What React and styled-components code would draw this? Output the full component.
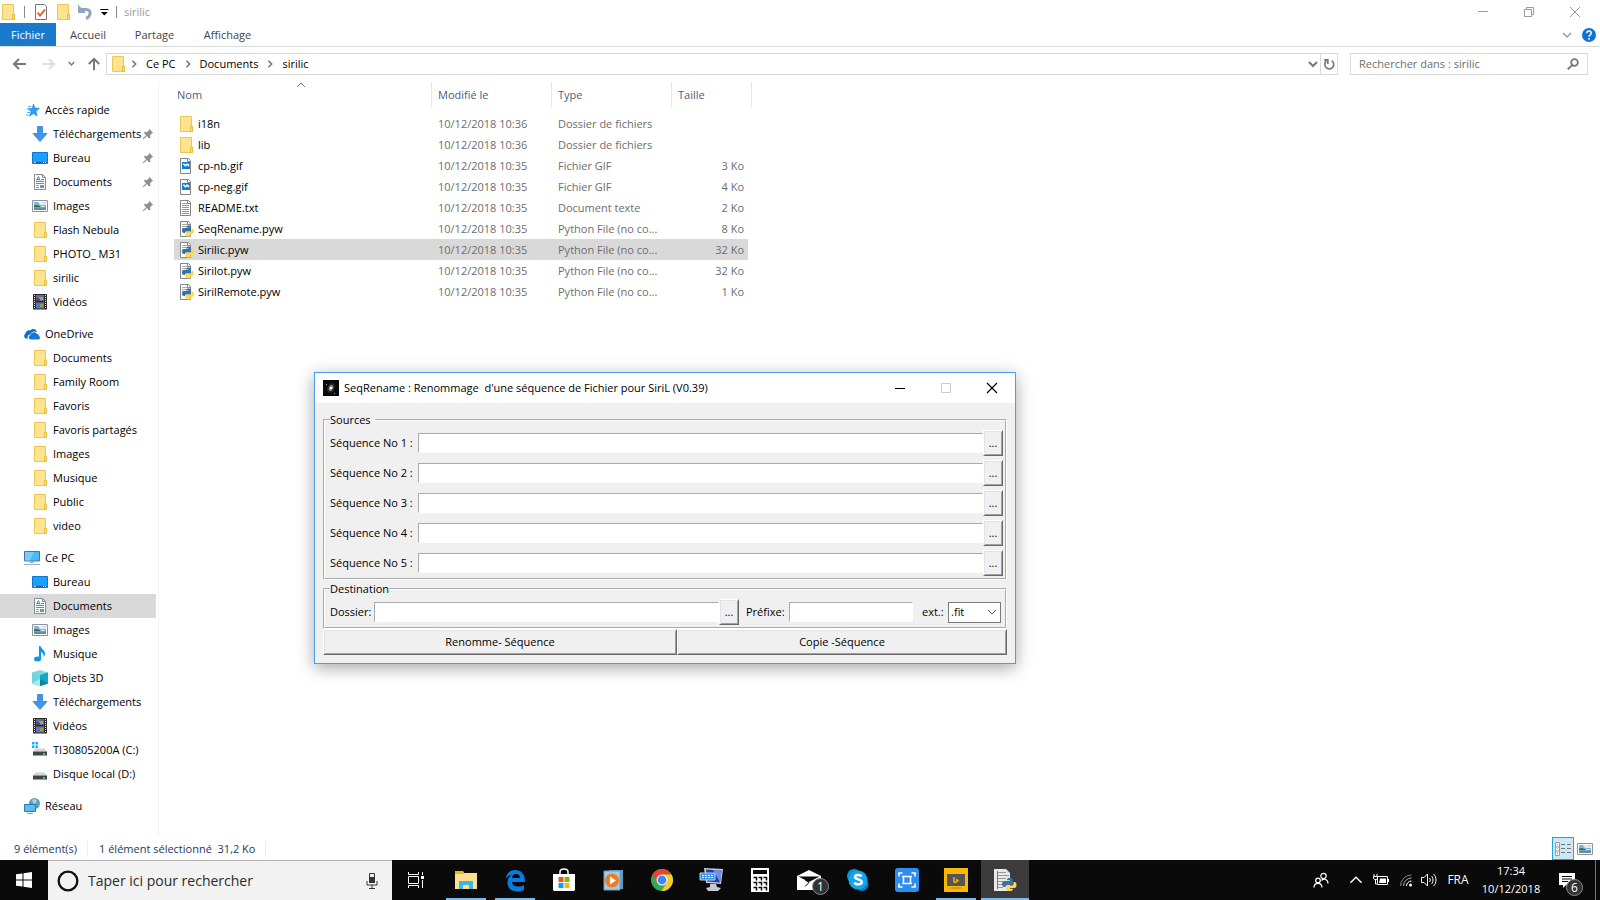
import React from 'react'
import styled, { createGlobalStyle, css } from 'styled-components'

const GlobalStyle = createGlobalStyle`
  * {
    box-sizing: border-box;
  }
  body {
    margin: 0;
    background: #fff;
    color: #000;
    font: 11px/16px "Open Sans", "Noto Sans", sans-serif;
  }
  button, input, select {
    font: inherit;
    color: inherit;
    margin: 0;
    padding: 0;
    border-radius: 0;
  }
  a {
    color: inherit;
    text-decoration: none;
  }
  svg {
    display: block;
    flex: none;
  }
`

const Desktop = styled.div`
  position: relative;
  display: flex;
  flex-direction: column;
  min-height: 100vh;
`

/* ---------- icons ---------- */

const Svg = ({ size = 16, w, h, children, ...rest }) => (
  <svg width={w || size} height={h || size} viewBox={`0 0 ${w || 16} ${h || 16}`} fill="none" aria-hidden="true" {...rest}>
    {children}
  </svg>
)

const Chevron = ({ dir = 'down', size = 10, color = '#777', weight = 1.5 }) => {
  const d = {
    down: 'M1 3l4 4 4-4',
    up: 'M1 7l4-4 4 4',
    right: 'M3 1l4 4-4 4',
  }[dir]
  return (
    <svg width={size} height={size} viewBox="0 0 10 10" fill="none" aria-hidden="true">
      <path d={d} stroke={color} strokeWidth={weight} />
    </svg>
  )
}

const FolderIcon = () => (
  <Svg>
    <path d="M2.500.5h11v9.500h1v5.500h-12z" fill="#ffe391" stroke="#ecc84e" />
    <path d="M12.500 15.500v-5h2v5z" fill="#ffe08a" stroke="#e6bd3e" />
  </Svg>
)

const StarIcon = () => (
  <Svg>
    <path d="M9.500 2l1.400 4 4.600.4-3.500 2.800 1.100 4.800-3.600-2.500-4 2.700 1.600-4.700-3.100-2.900 4.200-.2z" fill="#2a9df4" stroke="#1b82d1" strokeWidth=".6" />
    <path d="M4 4.500h3M2.500 7h3M3 10.500h3M2 13h3" stroke="#55b5f7" />
  </Svg>
)

const DownloadIcon = () => (
  <Svg>
    <path d="M5.500.5h5v7h4.500l-7 8-7-8h4.500z" fill="#3f97ec" stroke="#2f80d2" strokeWidth=".8" />
  </Svg>
)

const DesktopIcon = () => (
  <Svg>
    <path d="M.5 2.500h15v11H.5z" fill="#1a9fff" stroke="#0b77cf" />
    <path d="M1 12.500h14" stroke="#0a5fae" />
    <path d="M2 12.500h1.500M11 12.500h1M13 12.500h1" stroke="#fff" />
  </Svg>
)

const DocumentIcon = () => (
  <Svg>
    <path d="M2.500.5h8l3 3v12h-11z" fill="#fff" stroke="#8a8a8a" />
    <path d="M10.500.5v3h3" stroke="#8a8a8a" />
    <path d="M4.500 6.500l2-4 1.500 4M5 5.500h2.500" stroke="#2492d8" />
    <path d="M9 5.500h3M4 7.500h8M4 9.500h8" stroke="#3a9ad6" />
    <path d="M4 11.500h3M4 13.500h3" stroke="#999" />
    <path d="M8 11h4v3H8z" fill="#5d9cc0" />
  </Svg>
)

const PictureIcon = () => (
  <Svg>
    <path d="M.5 2.500h15v11H.5z" fill="#fff" stroke="#8f9499" />
    <path d="M2 4h12v4H2z" fill="#7db4ea" />
    <path d="M6 4h5l3 1v2H8z" fill="#dcebf8" />
    <path d="M2 7.500l3-.5 5 2 4-.500V9.500H2z" fill="#3f6b4f" />
    <path d="M2 9.500h12V12H2z" fill="#5c8fa8" />
  </Svg>
)

const VideoIcon = () => (
  <Svg>
    <path d="M1 0h14v15.500H1z" fill="#2e2e2e" />
    <path d="M4 1h8v6H4z" fill="#4a6cc0" />
    <path d="M4 8.500h8v6H4z" fill="#5577c8" />
    <path d="M7 3h4v3H7z" fill="#c0a032" />
    <path d="M4 4.500h4v2.500H4z" fill="#8d3332" />
    <path d="M8 10h3v3H8z" fill="#a8963c" />
    <path d="M2.500 1v14M13.500 1v14" stroke="#e8e8e8" strokeDasharray="1 1" />
  </Svg>
)

const OneDriveIcon = () => (
  <Svg>
    <path d="M1.500 12.500A3 3 0 0 1 1.500 7.500 3.500 3.500 0 0 1 6 4.500a4 4 0 0 1 7 1.500c-3-1.500-6 0-6.500 2.500-2.500-.2-3.500 2-2.500 4z" fill="#0d6fc9" />
    <path d="M6.500 13.500a2.300 2.300 0 0 1 0-4.500 3.500 3.500 0 0 1 6.500-1c1.500 0 2 .8 1.800 2 1.700.5 1.500 3.500-.3 3.500z" fill="#1079d9" />
  </Svg>
)

const PcIcon = () => (
  <Svg>
    <path d="M.5 1.500h15v9.500H.5z" fill="#4cb8f8" stroke="#3a7ca8" />
    <path d="M1 2h9L6 10.500H1z" fill="#7accfb" />
    <path d="M6 12h4v1H6z" fill="#8fa3b3" />
    <path d="M0 14.500h16" stroke="#9fb0be" />
  </Svg>
)

const MusicIcon = () => (
  <Svg>
    <ellipse cx="5.500" cy="13" rx="3.500" ry="2.500" fill="#0a97f0" />
    <path d="M7 13V0h1.500c.5 3 4.500 4 4.500 7.500 0 1.500-.5 2.500-1.500 3.500.5-3-1-4.500-2.500-5v7z" fill="#0a97f0" />
  </Svg>
)

const CubeIcon = () => (
  <Svg>
    <path d="M8 0l8 2.500v11L8 16l-8-2.500v-11z" fill="#7bdbe3" />
    <path d="M0 2.500L8 5v11l-8-2.500z" fill="#6fd5de" />
    <path d="M8 5l8-2.500v11L8 16z" fill="#16a4c8" />
    <path d="M0 13.500L8 9v7z" fill="#a5ecf0" />
    <path d="M8 9l8 4.500L8 16z" fill="#0d8596" />
  </Svg>
)

const DriveIcon = ({ system }) => (
  <Svg>
    {system && <path d="M0 0h2.500v2.500H0zM3.500 0H6v2.500H3.500zM0 3.500h2.500V6H0zM3.500 3.500H6V6H3.500z" fill="#14b0ef" />}
    <path d="M3.500 6.500h9l2.500 3H1z" fill="#d2d4d6" />
    <path d="M1 9.500h14v4H1z" fill="#3f4347" />
    <path d="M11 12h2" stroke="#5cf06a" strokeWidth="1.500" />
  </Svg>
)

const NetworkIcon = () => (
  <Svg>
    <circle cx="10.500" cy="5.500" r="5.500" fill="#5c9db8" />
    <path d="M8 2c2-1.500 4-1 5 1l-2 3-2-1z" fill="#a9d6de" />
    <path d="M.5 6.500h11v7H.5z" fill="#55bdf8" stroke="#2f77a8" />
    <path d="M3 15.500h6" stroke="#8fa3b3" />
  </Svg>
)

const PinIcon = () => (
  <Svg size={12}>
    <path d="M9.500 1l5.500 5.500-1.800.6-2.200 2.400.2 3-1.500 1.500-3.200-3.200L2 15 1 14l4.500-4.500L2.500 6.500 4 5l3 .2L9.200 3z" fill="#8c9299" />
  </Svg>
)

const Page = ({ children }) => (
  <Svg>
    <g transform="translate(1 0)">
      <path d="M1.500.5h8l2 2v13h-10z" fill="#fff" stroke="#858585" />
      <path d="M8.500.5v3h3" stroke="#858585" />
      {children}
    </g>
  </Svg>
)

const GifIcon = () => (
  <Page>
    <path d="M3 4h8v7H3z" fill="#0c7cd5" />
    <path d="M4 6.500l1-.500 1.500 2L8 6l1.500 1.500V6" stroke="#fff" strokeWidth="1.300" />
  </Page>
)

const TextIcon = () => (
  <Page>
    <path d="M3 3.500h5M3 5.500h7M3 7.500h7M3 9.500h7M3 11.500h7M3 13.500h7" stroke="#9a9a9a" />
  </Page>
)

const PythonShape = () => (
  <>
    <path d="M7 6.500C7 5 8 4.500 9.500 4.500S12 5 12 6.500V9c0 1-.5 1.500-1.500 1.500h-3C6.500 10.500 6 11 6 12H5c-1.500 0-2-1-2-2.500S3.500 7 5 7h4.500v-.5z" fill="#3673a5" />
    <path d="M12.500 8h.8c1.200 0 1.700 1 1.700 2.500S14.500 13 13 13h-3.500v.5H12c0 1.500-1 2-2.500 2S6.500 15 6.500 13.500V12c0-.8.500-1.200 1.300-1.200h3c1 0 1.700-.7 1.700-1.700z" fill="#ffd748" />
  </>
)

const PythonIcon = () => (
  <Page>
    <path d="M3 3.500h5M3 5.500h4M3 7.500h2" stroke="#aaa" />
    <PythonShape />
  </Page>
)

/* ---------- explorer window ---------- */

const TitleBar = styled.header`
  display: flex;
  align-items: center;
  height: 23px;
  padding: 0 2px 0 0;
  color: #999;
`

const QuickAccess = styled.div`
  display: flex;
  align-items: center;
  gap: 6px;
  flex: 1;
`

const QuickButton = styled.button`
  display: flex;
  border: 0;
  background: none;
`

const Divider = styled.span`
  width: 1px;
  height: 12px;
  margin: 0 ${props => props.$gap || 1}px;
  background: #8a8a8a;
`

const WindowButton = styled.button`
  display: flex;
  align-items: center;
  justify-content: center;
  width: 46px;
  height: ${props => props.$height}px;
  border: 0;
  background: none;
`

const Tabs = styled.nav`
  display: flex;
  align-items: center;
  height: 24px;
  border-bottom: 1px solid #dadbdc;
  color: #444;
`

const Tab = styled.a`
  height: 23px;
  line-height: 24px;
  width: ${props => props.$width}px;
  text-align: center;
  ${props => props.$active && css`
    background: #1979ca;
    color: #fff;
  `}
`

const TabsEnd = styled.div`
  display: flex;
  align-items: center;
  gap: 10px;
  margin-left: auto;
  padding-right: 4px;
`

const AddressRow = styled.div`
  display: flex;
  align-items: center;
  height: 35px;
  padding: 0 12px 2px 12px;
`

const Arrows = styled.div`
  display: flex;
  align-items: center;
  width: 94px;
  gap: 12px;
`

const AddressBox = styled.div`
  display: flex;
  align-items: center;
  flex: 1;
  height: 22px;
  border: 1px solid #d9d9d9;
  padding-left: 3px;
`

const Crumbs = styled.nav`
  display: flex;
  align-items: center;
  flex: 1;
  gap: 8px;
  padding-left: 4px;
`

const Refresh = styled.button`
  display: flex;
  align-items: center;
  justify-content: center;
  width: 17px;
  height: 20px;
  margin-left: 2px;
  border: 0;
  border-left: 1px solid #d9d9d9;
  background: none;
`

const SearchBox = styled.label`
  display: flex;
  align-items: center;
  width: 238px;
  height: 22px;
  margin-left: 12px;
  padding: 0 8px;
  border: 1px solid #d9d9d9;
  color: #6d6d6d;
`

const PlainInput = styled.input`
  flex: 1;
  min-width: 0;
  border: 0;
  outline: 0;
  background: none;
  &::placeholder {
    color: inherit;
    opacity: 1;
  }
`

const Main = styled.main`
  display: flex;
  flex: 1;
`

const NavPane = styled.nav`
  width: 159px;
  padding: 16px 2px 0 0;
  border-right: 1px solid #f2f2f2;
`

const NavGroup = styled.ul`
  list-style: none;
  margin: 0 0 8px;
  padding: 0;
`

const NavLink = styled.a`
  display: flex;
  align-items: center;
  height: 24px;
  padding: 0 2px 0 ${props => (props.$root ? 24 : 32)}px;
  background: ${props => (props.$selected ? '#d9d9d9' : 'none')};
`

const NavLabel = styled.span`
  flex: 1;
  margin-left: 5px;
  overflow: hidden;
  white-space: nowrap;
`

const FilePane = styled.section`
  flex: 1;
  padding-left: 15px;
`

const FileTable = styled.table`
  width: 578px;
  table-layout: fixed;
  border-spacing: 0;
  color: #6d6d6d;
`

const HeadCell = styled.th`
  height: 25px;
  padding: 0 6px;
  width: ${props => props.$width}px;
  border-right: 1px solid #e5e5e5;
  color: #4c607a;
  font-weight: normal;
  text-align: left;
  &:first-child {
    padding-left: 3px;
  }
`

const SortMark = styled.span`
  display: flex;
  justify-content: center;
  height: 0;
  & > svg {
    margin-top: -7px;
  }
`

const Spacer = styled.tbody`
  height: 6px;
`

const Cell = styled.td`
  height: 21px;
  padding: 0 4px 0 6px;
  white-space: nowrap;
  overflow: hidden;
  text-overflow: ellipsis;
  background: ${props => (props.$selected ? '#d9d9d9' : 'none')};
  background-clip: padding-box;
  text-align: ${props => (props.$right ? 'right' : 'left')};
  &:first-child {
    padding-left: 4px;
  }
  &:last-child {
    border-right: 4px solid transparent;
  }
`

const FileName = styled.span`
  display: flex;
  align-items: center;
  gap: 4px;
  color: #000;
`

const StatusBar = styled.footer`
  display: flex;
  align-items: center;
  height: 23px;
  padding: 0 4px 0 14px;
  color: #1e395b;
`

const StatusItem = styled.span`
  padding-right: 10px;
  margin-right: 11px;
  border-right: 1px solid #eee;
  white-space: pre;
`

const ViewButton = styled.button`
  display: flex;
  align-items: center;
  justify-content: center;
  width: 22px;
  height: 23px;
  border: 1px solid ${props => (props.$active ? '#26a0da' : 'transparent')};
  background: ${props => (props.$active ? '#cce8f6' : 'none')};
`

const StatusEnd = styled.div`
  display: flex;
  margin-left: auto;
`

/* ---------- SeqRename dialog ---------- */

const Dialog = styled.section`
  position: absolute;
  left: 314px;
  top: 372px;
  width: 702px;
  border: 1px solid #4a9cf0;
  background: #f0f0f0;
  box-shadow: 0 4px 16px rgba(0, 0, 0, 0.35);
`

const DialogTitle = styled.header`
  display: flex;
  align-items: center;
  height: 30px;
  padding-left: 8px;
  gap: 5px;
  background: #fff;
  white-space: pre;
`

const TitleText = styled.span`
  flex: 1;
`

const DialogBody = styled.form`
  padding: 9px 8px 8px;
`

const Group = styled.fieldset`
  margin: 0;
  padding: 2px 2px 2px 5px;
  border: 2px groove #fff;
  & + & {
    margin-top: 1px;
  }
`

const Legend = styled.legend`
  padding: 0 ${props => props.$pad || 0}px 0 0;
`

const Row = styled.div`
  display: flex;
  align-items: center;
  height: 26px;
  margin: 0 ${props => props.$inset || 0}px 4px 0;
  &:last-child {
    margin-bottom: 0;
  }
`

const Label = styled.label`
  width: ${props => props.$width}px;
  margin-left: ${props => props.$indent || 0}px;
  white-space: nowrap;
`

const PathInput = styled.input`
  height: 20px;
  min-width: 0;
  border: 1px inset #fff;
  outline: 0;
  background: #fff;
  ${props => (props.$width ? `width: ${props.$width}px;` : 'flex: 1;')}
`

const BevelButton = styled.button`
  height: 26px;
  width: ${props => props.$width}px;
  flex: ${props => props.$grow || 'none'};
  border: 1px solid;
  border-color: #fff #696969 #696969 #fff;
  box-shadow: inset 1px 1px #e3e3e3, inset -1px -1px #a0a0a0;
  background: #f0f0f0;
`

const SelectWrap = styled.span`
  display: grid;
  align-items: center;
  width: 53px;
  & > * {
    grid-area: 1 / 1;
  }
  & > svg {
    justify-self: end;
    margin-right: 4px;
    pointer-events: none;
  }
`

const Select = styled.select`
  appearance: none;
  height: 21px;
  padding-left: 2px;
  border: 1px solid #7a7a7a;
  background: #fff;
`

const Actions = styled.div`
  display: flex;
`

/* ---------- taskbar ---------- */

const Taskbar = styled.footer`
  display: flex;
  align-items: stretch;
  height: 40px;
  background: #0a0a0a;
  color: #fff;
`

const TaskSearch = styled.label`
  display: flex;
  align-items: center;
  width: 344px;
  gap: 9px;
  padding: 0 14px 0 9px;
  border-top: 1px solid #b5b5b5;
  background: #f2f2f2;
  color: #2b2b2b;
  font-size: 14px;
  line-height: 20px;
`

const TaskButton = styled.button`
  display: flex;
  align-items: center;
  justify-content: center;
  width: 48px;
  margin-right: 1px;
  border: 0;
  background: ${props => (props.$active ? '#3c3c3c' : 'none')};
  ${props => (props.$open || props.$active) && css`
    background-image: linear-gradient(#76b9ed, #76b9ed);
    background-size: ${props.$active ? 48 : 40}px 2px;
    background-position: center bottom;
    background-repeat: no-repeat;
  `}
`

const TaskList = styled.div`
  display: flex;
  flex: 1;
  padding-left: 1px;
`

const Tray = styled.div`
  display: flex;
  align-items: center;
`

const TrayButton = styled.button`
  display: flex;
  align-items: center;
  justify-content: center;
  width: ${props => props.$width}px;
  height: 40px;
  border: 0;
  background: none;
  font-size: 12px;
`

const Clock = styled.time`
  width: 72px;
  line-height: 18px;
  text-align: center;
`

const ShowDesktop = styled.button`
  width: 5px;
  height: 40px;
  margin-left: 8px;
  border: 0;
  border-left: 1px solid #777;
  background: none;
`

const Badged = styled.span`
  position: relative;
  display: flex;
`

const Badge = styled.span`
  position: absolute;
  left: ${props => props.$left}px;
  top: ${props => props.$top}px;
  width: 17px;
  height: 17px;
  border: 1px solid #8a8a8a;
  border-radius: 50%;
  background: #333;
  color: #fff;
  font-size: 12px;
  line-height: 15px;
  text-align: center;
`

const quickLinks = [
  ['Accès rapide', StarIcon],
  ['Téléchargements', DownloadIcon, true],
  ['Bureau', DesktopIcon, true],
  ['Documents', DocumentIcon, true],
  ['Images', PictureIcon, true],
  ['Flash Nebula', FolderIcon],
  ['PHOTO_ M31', FolderIcon],
  ['sirilic', FolderIcon],
  ['Vidéos', VideoIcon],
]

const oneDrive = [
  ['OneDrive', OneDriveIcon],
  ...['Documents', 'Family Room', 'Favoris', 'Favoris partagés', 'Images', 'Musique', 'Public', 'video'].map(
    name => [name, FolderIcon]
  ),
]

const thisPc = [
  ['Ce PC', PcIcon],
  ['Bureau', DesktopIcon],
  ['Documents', DocumentIcon, false, true],
  ['Images', PictureIcon],
  ['Musique', MusicIcon],
  ['Objets 3D', CubeIcon],
  ['Téléchargements', DownloadIcon],
  ['Vidéos', VideoIcon],
  ['TI30805200A (C:)', () => <DriveIcon system />],
  ['Disque local (D:)', DriveIcon],
]

const groups = [quickLinks, oneDrive, thisPc, [['Réseau', NetworkIcon]]]

const python = 'Python File (no co...'
const files = [
  ['i18n', FolderIcon, '10:36', 'Dossier de fichiers', ''],
  ['lib', FolderIcon, '10:36', 'Dossier de fichiers', ''],
  ['cp-nb.gif', GifIcon, '10:35', 'Fichier GIF', '3 Ko'],
  ['cp-neg.gif', GifIcon, '10:35', 'Fichier GIF', '4 Ko'],
  ['README.txt', TextIcon, '10:35', 'Document texte', '2 Ko'],
  ['SeqRename.pyw', PythonIcon, '10:35', python, '8 Ko'],
  ['Sirilic.pyw', PythonIcon, '10:35', python, '32 Ko'],
  ['Sirilot.pyw', PythonIcon, '10:35', python, '32 Ko'],
  ['SirilRemote.pyw', PythonIcon, '10:35', python, '1 Ko'],
]

function Explorer() {
  return (
    <>
      <TitleBar>
        <QuickAccess>
          <FolderIcon />
          <Divider $gap={2} />
          <QuickButton aria-label="Propriétés">
            <Svg>
              <path d="M2.500.5h9l2 2v13h-11z" fill="#fff" stroke="#777" />
              <path d="M4.500 8.500l2.500 3L12 5.500" stroke="#e8591c" strokeWidth="1.800" />
            </Svg>
          </QuickButton>
          <QuickButton aria-label="Nouveau dossier"><FolderIcon /></QuickButton>
          <QuickButton aria-label="Annuler">
            <Svg>
              <path d="M3 5.500h6c6 0 5 7 0 9" stroke="#92a3c0" strokeWidth="3" />
              <path d="M1 .5v8.500h8z" fill="#92a3c0" />
            </Svg>
          </QuickButton>
          <QuickButton aria-label="Personnaliser">
            <Svg size={10}>
              <path d="M2 4h13" stroke="#000" strokeWidth="1.600" />
              <path d="M3 8h11l-5.500 5.500z" fill="#000" />
            </Svg>
          </QuickButton>
          <Divider />
          <span>sirilic</span>
        </QuickAccess>
        <WindowButton $height={23} aria-label="Réduire">
          <Svg w={12} h={12}><path d="M1 5.500h10" stroke="#999" /></Svg>
        </WindowButton>
        <WindowButton $height={23} aria-label="Niveau inférieur">
          <Svg w={12} h={12}>
            <path d="M1.500 3.500h7v7h-7zM3.500 3V1.500h7v7H9" stroke="#999" />
          </Svg>
        </WindowButton>
        <WindowButton $height={23} aria-label="Fermer">
          <Svg w={12} h={12}><path d="M1 1l10 10M11 1L1 11" stroke="#999" /></Svg>
        </WindowButton>
      </TitleBar>

      <Tabs>
        <Tab href="#fichier" $width={56} $active>Fichier</Tab>
        <Tab href="#accueil" $width={64}>Accueil</Tab>
        <Tab href="#partage" $width={69}>Partage</Tab>
        <Tab href="#affichage" $width={77}>Affichage</Tab>
        <TabsEnd>
          <Chevron color="#999" />
          <Svg size={14}>
            <circle cx="8" cy="8" r="8" fill="#0f74d1" />
            <path d="M5.500 6c0-3.300 5-3.300 5 0 0 1.800-2.500 1.800-2.500 4M8 11.500v2" stroke="#fff" strokeWidth="1.700" />
          </Svg>
        </TabsEnd>
      </Tabs>

      <AddressRow>
        <Arrows>
          <QuickButton aria-label="Précédent">
            <Svg><path d="M2 8h12M7 3L2 8l5 5" stroke="#777" strokeWidth="2" /></Svg>
          </QuickButton>
          <QuickButton aria-label="Suivant">
            <Svg><path d="M2 8h12M9 3l5 5-5 5" stroke="#ddd" strokeWidth="2" /></Svg>
          </QuickButton>
          <Chevron size={7} weight={2} />
          <QuickButton aria-label="Dossier parent">
            <Svg size={14}><path d="M8 15V2M2 8l6-6 6 6" stroke="#777" strokeWidth="2.200" /></Svg>
          </QuickButton>
        </Arrows>
        <AddressBox>
          <FolderIcon />
          <Crumbs>
            <Chevron dir="right" weight={2} size={8} />
            <a href="#pc">Ce PC</a>
            <Chevron dir="right" weight={2} size={8} />
            <a href="#documents">Documents</a>
            <Chevron dir="right" weight={2} size={8} />
            <a href="#sirilic">sirilic</a>
          </Crumbs>
          <Chevron weight={2} />
          <Refresh aria-label="Actualiser">
            <Svg size={12}>
              <path d="M11.500 3.500a6 6 0 1 1-7 .5M1.500 2.500h5v5.500" stroke="#777" strokeWidth="2.200" />
            </Svg>
          </Refresh>
        </AddressBox>
        <SearchBox>
          <PlainInput type="search" aria-label="Rechercher" placeholder="Rechercher dans : sirilic" />
          <Svg size={12}>
            <circle cx="10" cy="6" r="4.500" stroke="#777" strokeWidth="2.400" />
            <path d="M7 9.500L1 15" stroke="#777" strokeWidth="2.600" />
          </Svg>
        </SearchBox>
      </AddressRow>

      <Main>
        <NavPane>
          {groups.map((group, g) => (
            <NavGroup key={g}>
              {group.map(([name, Icon, pinned, selected], i) => (
                <li key={name}>
                  <NavLink href="#" $root={i === 0} $selected={selected}>
                    <Icon />
                    <NavLabel>{name}</NavLabel>
                    {pinned && <PinIcon />}
                  </NavLink>
                </li>
              ))}
            </NavGroup>
          ))}
        </NavPane>
        <FilePane>
          <FileTable>
            <thead>
              <tr>
                <HeadCell $width={258}>
                  <SortMark><Chevron dir="up" size={10} weight={1} /></SortMark>
                  Nom
                </HeadCell>
                <HeadCell $width={120}>Modifié le</HeadCell>
                <HeadCell $width={120}>Type</HeadCell>
                <HeadCell $width={80}>Taille</HeadCell>
              </tr>
            </thead>
            <Spacer><tr /></Spacer>
            <tbody>
              {files.map(([name, Icon, time, type, size]) => {
                const selected = name === 'Sirilic.pyw'
                return (
                  <tr key={name}>
                    <Cell $selected={selected}>
                      <FileName><Icon />{name}</FileName>
                    </Cell>
                    <Cell $selected={selected}>10/12/2018 {time}</Cell>
                    <Cell $selected={selected}>{type}</Cell>
                    <Cell $selected={selected} $right>{size}</Cell>
                  </tr>
                )
              })}
            </tbody>
          </FileTable>
        </FilePane>
      </Main>

      <StatusBar>
        <StatusItem>9 élément(s)</StatusItem>
        <StatusItem>{'1 élément sélectionné  31,2 Ko'}</StatusItem>
        <StatusEnd>
          <ViewButton $active aria-label="Détails">
            <Svg w={16} h={14}>
              <path d="M.5.500h4v13h-4zM.5 5h4M.5 9h4" fill="#fff" stroke="#999" />
              <path d="M2 3h1" stroke="#666" />
              <path d="M2 7h1" stroke="#39f" />
              <path d="M2 11h1" stroke="#e11" />
              <path d="M6 2.500h4M12 2.500h4M6 6.500h4M12 6.500h4M6 10.500h4M12 10.500h4" stroke="#777" />
            </Svg>
          </ViewButton>
          <ViewButton aria-label="Grandes icônes"><PictureIcon /></ViewButton>
        </StatusEnd>
      </StatusBar>
    </>
  )
}

function SeqRename() {
  return (
    <Dialog aria-label="SeqRename">
      <DialogTitle>
        <Svg>
          <path d="M0 0h16v16H0z" fill="#0a0a0a" />
          <ellipse cx="8" cy="8" rx="3.500" ry="5" fill="#2c2c2c" transform="rotate(25 8 8)" />
          <ellipse cx="8" cy="8" rx="2" ry="3" fill="#888" transform="rotate(25 8 8)" />
          <circle cx="8" cy="8" r="1.300" fill="#fff" />
          <path d="M11 13.500h1M3 4.500h1" stroke="#aaa" />
        </Svg>
        <TitleText>{"SeqRename : Renommage  d'une séquence de Fichier pour SiriL (V0.39)"}</TitleText>
        <Tray>
          <WindowButton $height={30} aria-label="Réduire">
            <Svg w={12} h={12}><path d="M1 6.500h10" stroke="#000" /></Svg>
          </WindowButton>
          <WindowButton $height={30} aria-label="Agrandir" disabled>
            <Svg w={12} h={12}><path d="M1.500 1.500h9v9h-9z" stroke="#ccc" /></Svg>
          </WindowButton>
          <WindowButton $height={30} aria-label="Fermer">
            <Svg w={12} h={12}><path d="M1 1l10 10M11 1L1 11" stroke="#000" strokeWidth="1.200" /></Svg>
          </WindowButton>
        </Tray>
      </DialogTitle>
      <DialogBody onSubmit={e => e.preventDefault()}>
        <Group>
          <Legend $pad={4}>Sources</Legend>
          {[1, 2, 3, 4, 5].map(n => (
            <Row key={n}>
              <Label htmlFor={`seq${n}`} $width={88}>Séquence No {n} :</Label>
              <PathInput id={`seq${n}`} />
              <BevelButton type="button" $width={20}>...</BevelButton>
            </Row>
          ))}
        </Group>
        <Group>
          <Legend>Destination</Legend>
          <Row $inset={2}>
            <Label htmlFor="dossier" $width={44}>Dossier:</Label>
            <PathInput id="dossier" />
            <BevelButton type="button" $width={20}>...</BevelButton>
            <Label htmlFor="prefixe" $width={43} $indent={7}>Préfixe:</Label>
            <PathInput id="prefixe" $width={124} />
            <Label htmlFor="ext" $width={26} $indent={9}>ext.:</Label>
            <SelectWrap>
              <Select id="ext" defaultValue=".fit">
                <option>.fit</option>
                <option>.fits</option>
              </Select>
              <Chevron color="#555" weight={1} />
            </SelectWrap>
          </Row>
        </Group>
        <Actions>
          <BevelButton type="submit" $grow="354 1 0">Renomme- Séquence</BevelButton>
          <BevelButton type="button" $grow="330 1 0">Copie -Séquence</BevelButton>
        </Actions>
      </DialogBody>
    </Dialog>
  )
}

/* Pinned and running applications, left to right. */
const apps = [
  {
    name: 'Explorateur', open: true,
    icon: (
      <>
        <path d="M1 3h8l1 2h13v16H1z" fill="#ffe08a" />
        <path d="M1 3h8l1 3H1z" fill="#f2b51e" />
        <path d="M5 13h14v8h-4v-4H9v4H5z" fill="#3fb4ea" />
      </>
    ),
  },
  {
    name: 'Edge', open: true,
    icon: (
      <path d="M2.500 11C3.500 5 7.500 2 12 2c6.500 0 10 4.500 10 11.500v.5H9c.5 3.500 3 4.500 6 4.500 2.500 0 4.500-.5 6-1.500v5c-2 1-4 1.500-7 1.500-6 0-9.500-3.500-9.500-9 0-3.500 2-6.500 5-8-3 .5-5.500 2-7 4.500zM9 10h8c0-2.500-1.500-4-4-4s-3.500 1.500-4 4z" fill="#0a7ce0" fillRule="evenodd" />
    ),
  },
  {
    name: 'Store',
    icon: (
      <>
        <path d="M8 6V4c0-4 8-4 8 0v2" stroke="#fff" strokeWidth="1.500" />
        <path d="M1 6h22v15c0 1.500-.5 2-2 2H3c-1.500 0-2-.5-2-2z" fill="#fff" />
        <path d="M6.500 9h5v5h-5z" fill="#f25022" />
        <path d="M12.500 9h5v5h-5z" fill="#7fba00" />
        <path d="M6.500 15h5v5h-5z" fill="#00a4ef" />
        <path d="M12.500 15h5v5h-5z" fill="#ffb900" />
      </>
    ),
  },
  {
    name: 'Lecteur multimédia',
    icon: (
      <>
        <path d="M8 2h14v19H8z" fill="#5f9cc4" />
        <path d="M3 3h16v19H3z" fill="#a4cde6" stroke="#6d9fbe" />
        <circle cx="11" cy="12.500" r="7" fill="#f47b20" />
        <path d="M9 8.500v8l6-4z" fill="#fff" />
      </>
    ),
  },
  {
    name: 'Chrome',
    icon: (
      <>
        <circle cx="12" cy="12" r="11" fill="#34a853" />
        <path d="M2.500 6.500A11 11 0 0 1 21.500 6.500H12L7.200 14.800z" fill="#ea4335" />
        <path d="M21.500 6.500A11 11 0 0 1 11.500 23l5.300-8.500L12 6.500z" fill="#fbc924" />
        <circle cx="12" cy="12" r="5.500" fill="#f5f5f5" />
        <circle cx="12" cy="12" r="4.400" fill="#4285f4" />
      </>
    ),
  },
  {
    name: 'Clavier visuel',
    icon: (
      <>
        <path d="M5 0l19 1-2 15-15-1z" fill="#c9ccd2" />
        <path d="M7 1.500l15.500 1-1.500 12-13-1z" fill="#1b3fb5" />
        <path d="M14 2l8.500.5-1.500 12z" fill="#6f8ee4" />
        <path d="M1 5h15v7H1z" fill="#3d93dc" stroke="#b7d6ee" />
        <path d="M3 7.500h11M3 9.500h11" stroke="#e3f1fb" strokeDasharray="2 1" />
        <path d="M11 16h6l1 3 4 1-3 3H9l-2-3 4-1z" fill="#c7cad0" />
      </>
    ),
  },
  {
    name: 'Calculatrice',
    icon: (
      <>
        <path d="M3 0h18v24H3z" fill="#fff" />
        <path d="M5 2h14v4H5z" fill="#0a0a0a" />
        <path d="M5.500 9.500h3v3M10.500 9.500h3v3M15.500 9.500h3v3M5.500 14.500h3v3M10.500 14.500h3v3M15.500 14.500h3v3M5.500 19.500h3v3M10.500 19.500h3v3M15.500 19.500h3v3" stroke="#0a0a0a" strokeWidth="1.500" />
      </>
    ),
  },
  {
    name: 'Courrier', badge: 1,
    icon: (
      <>
        <path d="M0 8l12-6 12 6v14H0z" fill="#fff" />
        <path d="M1.500 8.500h21L12 14z" fill="#0a0a0a" />
        <path d="M8 12l4 2.500-4 4" stroke="#0a0a0a" />
      </>
    ),
  },
  {
    name: 'Skype',
    icon: (
      <>
        <circle cx="8" cy="8" r="7" fill="#0a95da" />
        <circle cx="16" cy="16.500" r="6.500" fill="#0a80cc" />
        <circle cx="12" cy="12" r="9.500" fill="#12a5e9" />
        <path d="M15.500 8.500c-1-2-6.500-2.200-6.500.5 0 3 6.800 1.800 6.800 5 0 3-6.300 3-7.300.5" stroke="#fff" strokeWidth="2.500" />
      </>
    ),
  },
  {
    name: 'Capture',
    icon: (
      <>
        <rect x="0" y="0" width="24" height="24" rx="3" fill="#2e8df0" />
        <path d="M4 8.500V5h3.500M16.500 5H20v3.500M20 15.500V19h-3.500M7.500 19H4v-3.500" stroke="#fff" strokeWidth="1.600" />
        <path d="M7 8.500h10M7 15.500h10M8.500 8v8M15.500 8v8" stroke="#fff" strokeWidth="1.500" />
      </>
    ),
  },
  {
    name: 'Bing', open: true,
    icon: (
      <>
        <path d="M0 0h24v24H0z" fill="#fdb602" />
        <path d="M3 6h18v12H3z" fill="#555" />
        <path d="M10 9v5l1.500.500L14 12.500l-2-1" stroke="#fdb602" strokeWidth="1.400" />
        <path d="M7 20h10" stroke="#a97a05" />
      </>
    ),
  },
  {
    name: 'Python', active: true,
    icon: (
      <>
        <path d="M1 1h12l4 4v18H1z" fill="#e9e9e9" />
        <path d="M4 4.500h9M4 7.500h12M4 10.500h9M4 13.500h6M4 16.500h6M4 19.500h6" stroke="#999" />
        <path d="M4.500 3v18" stroke="#777" />
        <g transform="translate(5.500 4.500) scale(1.200)"><PythonShape /></g>
      </>
    ),
  },
]

function TaskbarRow() {
  return (
    <Taskbar>
      <TrayButton $width={48} aria-label="Démarrer">
        <Svg><path d="M0 2.300l6.500-.9v6.100H0zM7.500 1.200L16 0v7.500H7.500zM0 8.500h6.500v6.100L0 13.700zM7.500 8.500H16V16l-8.500-1.200z" fill="#fff" /></Svg>
      </TrayButton>
      <TaskSearch>
        <Svg size={22}><circle cx="8" cy="8" r="6.800" stroke="#111" strokeWidth="1.700" /></Svg>
        <PlainInput type="search" aria-label="Taper ici" placeholder="Taper ici pour rechercher" />
        <Svg w={12} h={18}>
          <path d="M3.500 1.500h5v9h-5z" fill="#f2f2f2" stroke="#333" />
          <path d="M3 5h6v6H3z" fill="#333" />
          <path d="M1 9v4h10V9M6 13v3M3 16.500h6" stroke="#333" />
        </Svg>
      </TaskSearch>
      <TaskButton aria-label="Affichage des tâches">
        <Svg w={16} h={16}>
          <path d="M.5 0v2.500h10V0M.5 16v-2.500h10V16M.5 4.500h10v7H.5z" stroke="#fff" />
          <path d="M14.500 0v3M14.500 8v8" stroke="#fff" />
          <path d="M13 4h3v3h-3z" fill="#fff" />
        </Svg>
      </TaskButton>
      <TaskList>
        {apps.map(app => (
          <TaskButton key={app.name} aria-label={app.name} $open={app.open} $active={app.active}>
            <Badged>
              <Svg w={24} h={24}>{app.icon}</Svg>
              {app.badge && <Badge $left={15} $top={10}>{app.badge}</Badge>}
            </Badged>
          </TaskButton>
        ))}
      </TaskList>
      <Tray>
        <TrayButton $width={48} aria-label="Contacts">
          <Svg w={16} h={16}>
            <circle cx="10.500" cy="4" r="2.700" stroke="#fff" strokeWidth="1.200" />
            <circle cx="5" cy="8.500" r="2.300" stroke="#fff" strokeWidth="1.200" />
            <path d="M1 15.500c0-5.500 8-5.500 8 0M8.500 8.500c2.500-2.500 6.500-1 6.500 3" stroke="#fff" strokeWidth="1.200" />
          </Svg>
        </TrayButton>
        <TrayButton $width={22} aria-label="Icônes cachées"><Chevron dir="up" size={14} color="#fff" weight={1} /></TrayButton>
        <TrayButton $width={28} aria-label="Batterie">
          <Svg w={16} h={16}>
            <path d="M4.500 4.500h10v8h-10zM15.500 7v3" stroke="#fff" />
            <path d="M7 6.500h6V11H6z" fill="#fff" />
            <path d="M1 2v2.500M4 2v2.500M.5 4.500h4V6L3.500 7.500h-2L.5 6zM2.500 7v5h2" fill="#0a0a0a" stroke="#fff" />
          </Svg>
        </TrayButton>
        <TrayButton $width={22} aria-label="Réseau">
          <Svg w={14} h={14}>
            <path d="M1.500 13A11 11 0 0 1 12.500 2" stroke="#888" />
            <path d="M4.500 13a8 8 0 0 1 8-8" stroke="#aaa" />
            <path d="M7.500 13a5 5 0 0 1 5-5" stroke="#fff" />
            <circle cx="11.500" cy="12" r="1.500" fill="#fff" />
          </Svg>
        </TrayButton>
        <TrayButton $width={24} aria-label="Volume">
          <Svg w={16} h={16}>
            <path d="M.5 5.500H3l3.500-3.500v12L3 10.500H.5z" stroke="#fff" />
            <path d="M8.500 6c1 1 1 3 0 4M10.500 4c2 2 2 6 0 8M12.500 2c3.300 3 3.300 9 0 12" stroke="#fff" />
          </Svg>
        </TrayButton>
        <TrayButton $width={34} aria-label="Langue">FRA</TrayButton>
        <Clock>17:34<br />10/12/2018</Clock>
        <TrayButton $width={40} aria-label="Notifications">
          <Badged>
            <Svg w={16} h={16}>
              <path d="M0 1h16v12H7l-3 3v-3H0z" fill="#fff" />
              <path d="M3 4.500h10M3 7h10M3 9.500h6" stroke="#0a0a0a" />
            </Svg>
            <Badge $left={7} $top={7}>6</Badge>
          </Badged>
        </TrayButton>
        <ShowDesktop aria-label="Afficher le bureau" />
      </Tray>
    </Taskbar>
  )
}

export default function App() {
  return (
    <Desktop>
      <GlobalStyle />
      <Explorer />
      <SeqRename />
      <TaskbarRow />
    </Desktop>
  )
}
